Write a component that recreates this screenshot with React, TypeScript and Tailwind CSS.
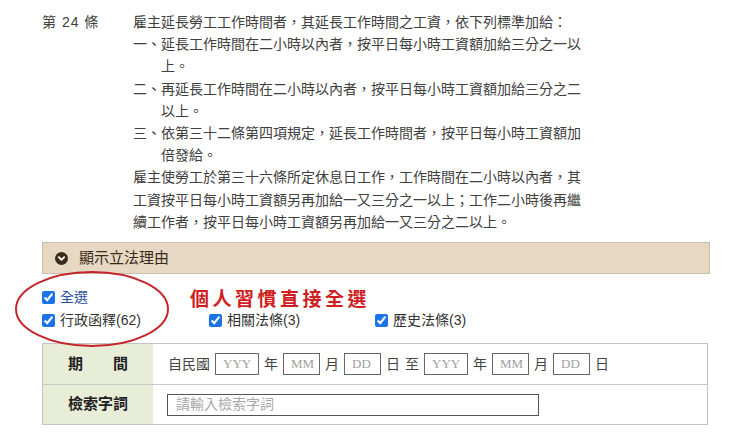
import React from "react";

const body = '"Liberation Sans", "Noto Sans CJK TC", sans-serif';

function Line({ children, indent = false }: { children: React.ReactNode; indent?: boolean }) {
  return <div className={indent ? "pl-[28px] whitespace-nowrap" : "whitespace-nowrap"}>{children}</div>;
}

function Check({ label, blue = false }: { label: string; blue?: boolean }) {
  return (
    <label className="flex items-center gap-[5px] h-[23px]">
      <input type="checkbox" checked readOnly className="w-[13px] h-[13px] accent-[#1b73e8]" />
      <span className={blue ? "text-[#2d4f9e]" : "text-[#333]"}>{label}</span>
    </label>
  );
}

function Box({ ph, w }: { ph: string; w: string }) {
  return (
    <div
      className={`${w} h-[22px] border border-[#666] bg-white flex items-center pl-[7px] text-[13px] text-[#a0a0a0]`}
      style={{ fontFamily: '"Liberation Serif", serif' }}
    >
      {ph}
    </div>
  );
}

export default function App() {
  return (
    <div className="relative w-[740px] h-[433px] bg-white text-[14px] text-[#404040] overflow-hidden" style={{ fontFamily: body }}>
      <div className="flex pt-[11px] pl-[42px] leading-[22.2px]">
        <div className="w-[91px] tracking-[1px]">第 24 條</div>
        <div>
          <Line>雇主延長勞工工作時間者，其延長工作時間之工資，依下列標準加給：</Line>
          <Line>一、延長工作時間在二小時以內者，按平日每小時工資額加給三分之一以</Line>
          <Line indent>上。</Line>
          <Line>二、再延長工作時間在二小時以內者，按平日每小時工資額加給三分之二</Line>
          <Line indent>以上。</Line>
          <Line>三、依第三十二條第四項規定，延長工作時間者，按平日每小時工資額加</Line>
          <Line indent>倍發給。</Line>
          <Line>雇主使勞工於第三十六條所定休息日工作，工作時間在二小時以內者，其</Line>
          <Line>工資按平日每小時工資額另再加給一又三分之一以上；工作二小時後再繼</Line>
          <Line>續工作者，按平日每小時工資額另再加給一又三分之二以上。</Line>
        </div>
      </div>

      <div className="ml-[42px] mt-[9px] w-[668px] h-[32px] bg-[#e6d8c3] border border-[#c9bdad] flex items-center pl-[12px] gap-[11px]">
        <svg width="13" height="13" viewBox="0 0 13 13">
          <circle cx="6.5" cy="6.5" r="6.5" fill="#3d2b1a" />
          <path d="M3.8 5.2 L6.5 7.9 L9.2 5.2" stroke="#fff" strokeWidth="1.9" fill="none" strokeLinecap="round" strokeLinejoin="round" />
        </svg>
        <span className="text-[15px] text-[#3b2a1a]">顯示立法理由</span>
      </div>

      <div className="ml-[42px] mt-[12px] flex flex-col">
        <div className="flex items-center">
          <div className="w-[148px]">
            <Check label="全選" blue />
          </div>
          <div
            className="text-[19px] font-bold text-[#cf1d22] tracking-[3.5px] leading-[23px]"
            style={{ fontFamily: '"Noto Sans CJK TC", serif' }}
          >
            個人習慣直接全選
          </div>
        </div>
        <div className="grid grid-cols-[167px_166px_160px]">
          <Check label="行政函釋(62)" />
          <Check label="相關法條(3)" />
          <Check label="歷史法條(3)" />
        </div>
      </div>

      <div className="ml-[42px] mt-[11px] w-[666px] border border-[#c4c4c4] text-[#222]">
        <div className="flex h-[41px] border-b border-[#c8c8c8]">
          <div className="w-[110px] bg-[#e8edd8] flex items-center justify-center font-bold text-[15px]">期　　間</div>
          <div className="flex-1 flex items-center gap-[5px] pl-[15px] text-[#444]">
            <span>自民國</span>
            <Box ph="YYY" w="w-[44px]" />
            <span>年</span>
            <Box ph="MM" w="w-[37px]" />
            <span>月</span>
            <Box ph="DD" w="w-[37px]" />
            <span>日</span>
            <span>至</span>
            <Box ph="YYY" w="w-[44px]" />
            <span>年</span>
            <Box ph="MM" w="w-[37px]" />
            <span>月</span>
            <Box ph="DD" w="w-[37px]" />
            <span>日</span>
          </div>
        </div>
        <div className="flex h-[39px]">
          <div className="w-[110px] bg-[#e8edd8] flex items-center justify-center font-bold text-[15px]">檢索字詞</div>
          <div className="flex-1 flex items-center pl-[14px]">
            <div className="w-[372px] h-[22px] border border-[#555] flex items-center pl-[8px] text-[#a8a8a8]">請輸入檢索字詞</div>
          </div>
        </div>
      </div>

      <svg className="absolute left-0 top-0 pointer-events-none" width="740" height="433">
        <ellipse cx="92" cy="309" rx="76" ry="37" fill="none" stroke="#c4262b" strokeWidth="2" />
      </svg>
    </div>
  );
}
